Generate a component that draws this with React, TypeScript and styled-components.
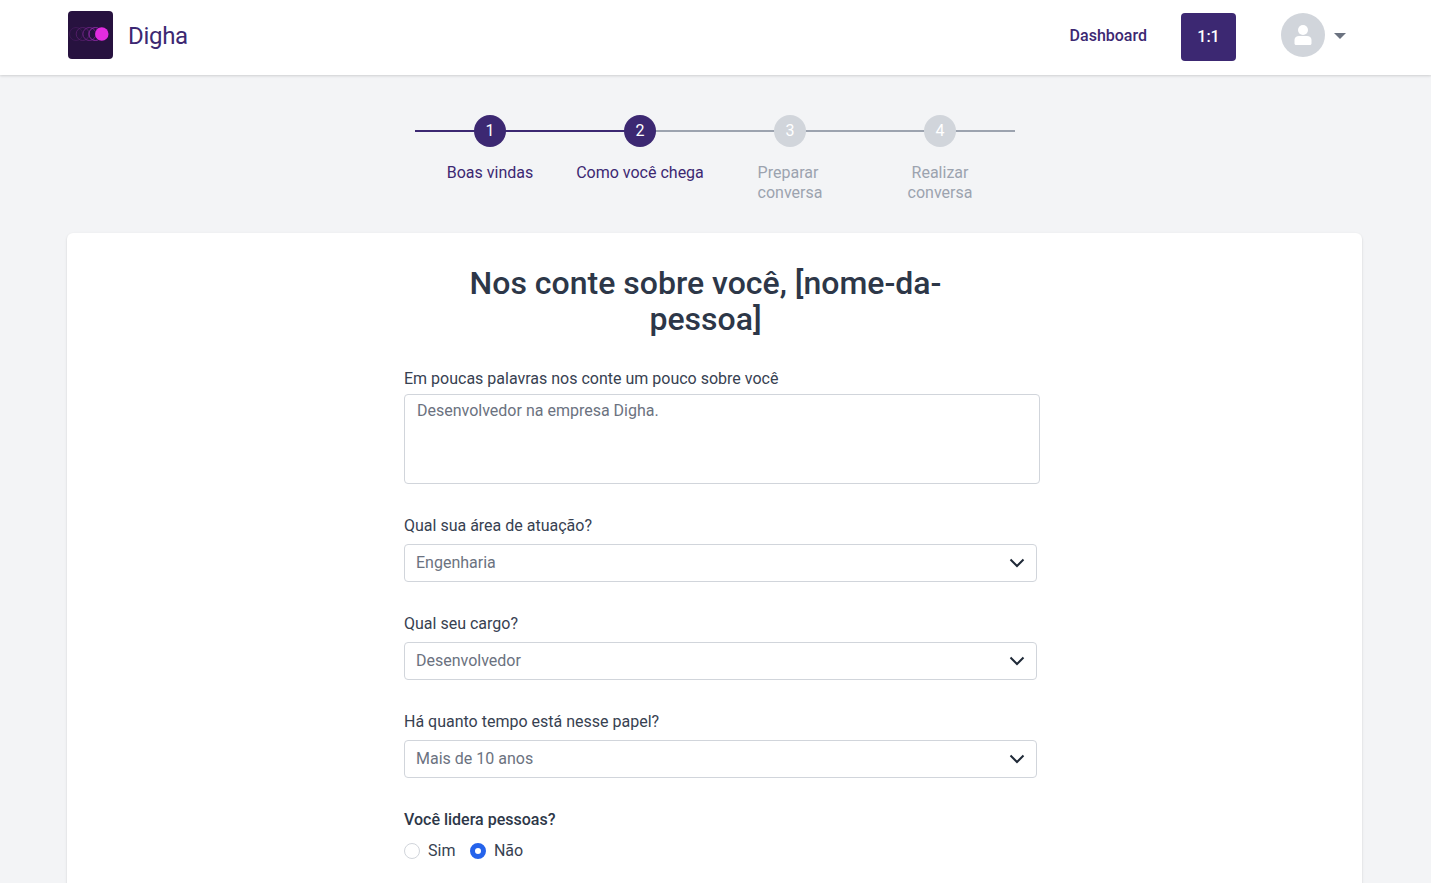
import React from "react";
import styled, { createGlobalStyle } from "styled-components";

const purple = "#3c2872";

const Global = createGlobalStyle`
  html, body { margin: 0; padding: 0; height: 100%; overflow: hidden; background: #f3f4f6; }
  body { font-family: Roboto, "Liberation Sans", sans-serif; -webkit-font-smoothing: antialiased; }
  * { box-sizing: border-box; }
`;

const Page = styled.div`
  height: 883px;
  overflow: hidden;
  background: #f3f4f6;
`;

const Header = styled.header`
  height: 75px;
  background: #fff;
  box-shadow: 0 1px 3px rgba(0, 0, 0, 0.1), 0 1px 2px rgba(0, 0, 0, 0.06);
  display: flex;
  align-items: center;
  padding: 0 85px 4px 68px;
`;

const Brand = styled.div`
  display: flex;
  align-items: center;
  gap: 15px;
  flex: 1;
`;

const Logo = styled.svg`
  width: 45px;
  height: 48px;
  margin-bottom: 1px;
  display: block;
`;

const BrandName = styled.span`
  font-size: 24px;
  letter-spacing: -0.3px;
  color: ${purple};
  line-height: 32px;
`;

const NavLink = styled.a`
  font-size: 16px;
  font-weight: 500;
  color: ${purple};
  margin-right: 34px;
`;

const OneOnOne = styled.button`
  width: 55px;
  height: 48px;
  border: 0;
  border-radius: 4px;
  background: ${purple};
  color: #fff;
  font-family: inherit;
  font-size: 16px;
  font-weight: 500;
  margin-top: 3px;
  margin-right: 45px;
  padding: 0 0 2px;
`;

const AvatarWrap = styled.div`
  display: flex;
  align-items: center;
  gap: 9px;
  margin-bottom: 2px;
`;

const Avatar = styled.div`
  width: 44px;
  height: 44px;
  border-radius: 50%;
  background: #d1d5db;
  display: flex;
  align-items: center;
  justify-content: center;
`;

const Caret = styled.div`
  width: 0;
  height: 0;
  margin-top: 2px;
  border-left: 6px solid transparent;
  border-right: 6px solid transparent;
  border-top: 6px solid #6b7280;
`;

const Stepper = styled.ol`
  list-style: none;
  margin: 0 0 0 415px;
  padding: 40px 0 0;
  height: 158px;
  width: 600px;
  display: flex;
`;

const Step = styled.li`
  width: 150px;
  display: flex;
  flex-direction: column;
  align-items: center;
`;

const Track = styled.div<{ $tone: string }>`
  width: 100%;
  height: 32px;
  display: flex;
  align-items: center;
  justify-content: center;
  background: ${(p) => p.$tone} center / 100% 2px no-repeat;
`;

const Dot = styled.span<{ $active: boolean }>`
  width: 32px;
  height: 32px;
  border-radius: 50%;
  background: ${(p) => (p.$active ? purple : "#d1d5db")};
  color: #fff;
  font-size: 16px;
  line-height: 32px;
  text-align: center;
`;

const StepLabel = styled.div<{ $active: boolean }>`
  margin-top: 16px;
  font-size: 16px;
  line-height: 20px;
  text-align: center;
  color: ${(p) => (p.$active ? purple : "#9ca3af")};
`;

const Card = styled.main`
  margin: 0 69px 0 67px;
  background: #fff;
  border-radius: 6px;
  box-shadow: 0 1px 3px rgba(0, 0, 0, 0.1), 0 1px 2px rgba(0, 0, 0, 0.06);
  padding: 32px 0 0 337px;
  height: 700px;
`;

const Form = styled.form`
  width: 636px;
`;

const Title = styled.h1`
  margin: 0 0 30px 59.5px;
  width: 484px;
  font-size: 32px;
  line-height: 36px;
  font-weight: 500;
  color: #2d3748;
  text-align: center;
`;

const Label = styled.label`
  display: block;
  font-size: 16px;
  line-height: 24px;
  color: #374151;
`;

const TextArea = styled.div`
  width: 636px;
  height: 90px;
  border: 1px solid #d1d5db;
  border-radius: 4px;
  padding: 4px 12px;
  margin-top: 3px;
  margin-bottom: 30px;
  font-size: 16px;
  line-height: 24px;
  color: #6b7280;
`;

const SelectBox = styled.div`
  width: 633px;
  height: 38px;
  border: 1px solid #d1d5db;
  border-radius: 4px;
  margin-top: 6px;
  margin-bottom: 30px;
  padding: 0 11px;
  display: flex;
  align-items: center;
  justify-content: space-between;
  font-size: 16px;
  color: #6b7280;
`;

const SelectValue = styled.span`
  margin-top: -2px;
`;

const Chevron = styled.svg`
  width: 16px;
  height: 10px;
  display: block;
`;

const BoldLabel = styled(Label)`
  font-weight: 500;
  color: #2d3748;
`;

const RadioRow = styled.div`
  display: flex;
  align-items: center;
  margin-top: 7px;
  font-size: 16px;
  line-height: 24px;
  color: #374151;
`;

const Radio = styled.span<{ $on: boolean }>`
  width: 16px;
  height: 16px;
  border-radius: 50%;
  border: ${(p) => (p.$on ? "5px solid #2563eb" : "1px solid #d1d5db")};
  background: #fff;
  margin-right: 8px;
`;

const RadioText = styled.span`
  margin-right: 14.5px;
`;

const steps = [
  { n: 1, l: <>Boas vindas</>, a: true, t: `linear-gradient(${purple}, ${purple})` },
  { n: 2, l: <>Como você chega</>, a: true, t: `linear-gradient(to right, ${purple} 50%, #9ca3af 50%)` },
  { n: 3, l: <>Preparar&nbsp;<br />conversa</>, a: false, t: "linear-gradient(#9ca3af, #9ca3af)" },
  { n: 4, l: <>Realizar<br />conversa</>, a: false, t: "linear-gradient(#9ca3af, #9ca3af)" },
];

const selects = [
  { q: "Qual sua área de atuação?", v: "Engenharia" },
  { q: "Qual seu cargo?", v: "Desenvolvedor" },
  { q: "Há quanto tempo está nesse papel?", v: "Mais de 10 anos" },
];

export default function App() {
  return (
    <Page>
      <Global />
      <Header>
        <Brand>
          <Logo viewBox="0 0 45 48">
            <rect width="45" height="48" rx="4" fill="#27123f" />
            <g fill="none" strokeWidth="0.8">
              <circle cx="8" cy="23" r="6.500" stroke="#43195a" />
              <circle cx="14.700" cy="23" r="6.500" stroke="#5b1f6e" />
              <circle cx="21.400" cy="23" r="6.500" stroke="#7a2590" />
              <circle cx="27.400" cy="23" r="6.500" stroke="#a52ebc" />
            </g>
            <circle cx="33.800" cy="23" r="6.700" fill="#e22ce0" />
          </Logo>
          <BrandName>Digha</BrandName>
        </Brand>
        <NavLink>Dashboard</NavLink>
        <OneOnOne>1:1</OneOnOne>
        <AvatarWrap>
          <Avatar>
            <svg width="18" height="20" viewBox="0 0 18 20" fill="#fff">
              <circle cx="9" cy="5" r="5" />
              <path d="M5 11h8c2.500 0 4.500 1.500 4.500 4v3.500c0 .8-.7 1.500-1.500 1.500H2c-.8 0-1.500-.7-1.500-1.500V15c0-2.500 2-4 4.500-4z" />
            </svg>
          </Avatar>
          <Caret />
        </AvatarWrap>
      </Header>
      <Stepper>
        {steps.map((s) => (
          <Step key={s.n}>
            <Track $tone={s.t}>
              <Dot $active={s.a}>{s.n}</Dot>
            </Track>
            <StepLabel $active={s.a}>{s.l}</StepLabel>
          </Step>
        ))}
      </Stepper>
      <Card>
        <Form>
          <Title>Nos conte sobre você, [nome-da-pessoa]</Title>
          <Label>Em poucas palavras nos conte um pouco sobre você</Label>
          <TextArea>Desenvolvedor na empresa Digha.</TextArea>
          {selects.map((s) => (
            <React.Fragment key={s.q}>
              <Label>{s.q}</Label>
              <SelectBox>
                <SelectValue>{s.v}</SelectValue>
                <Chevron viewBox="0 0 16 10" fill="none" stroke="#1f2937" strokeWidth="2">
                  <path d="M1.500 1.500 8 8l6.500-6.500" />
                </Chevron>
              </SelectBox>
            </React.Fragment>
          ))}
          <BoldLabel>Você lidera pessoas?</BoldLabel>
          <RadioRow>
            <Radio $on={false} />
            <RadioText>Sim</RadioText>
            <Radio $on={true} />
            <RadioText>Não</RadioText>
          </RadioRow>
        </Form>
      </Card>
    </Page>
  );
}
